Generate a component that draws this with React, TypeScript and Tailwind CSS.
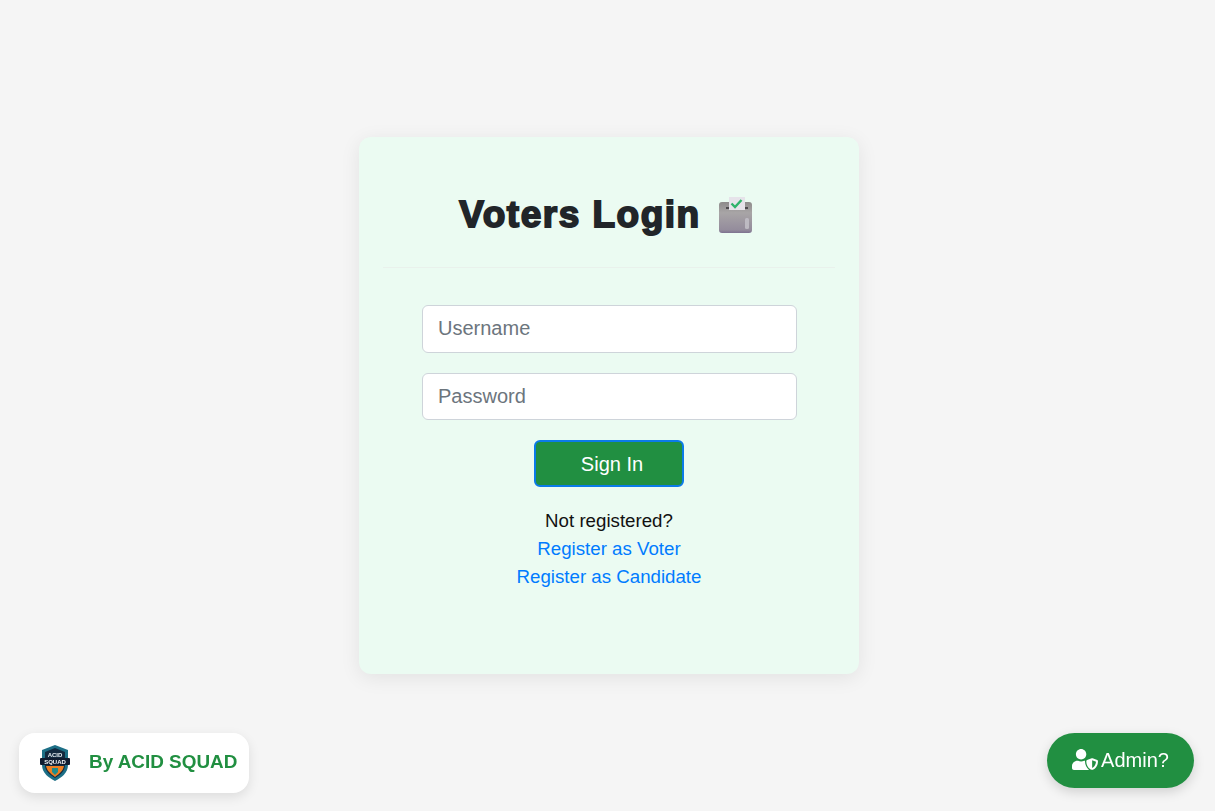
import { FaUserShield } from 'react-icons/fa';

function BallotBox() {
  return (
    <svg width="36" height="37" viewBox="0 0 36 37" className="shrink-0 mt-[3px]">
      <defs>
        <linearGradient id="boxBody" x1="0" y1="0" x2="0" y2="1">
          <stop offset="0" stopColor="#8e8b8b" />
          <stop offset="0.35" stopColor="#a8a5a6" />
          <stop offset="0.9" stopColor="#948c9c" />
          <stop offset="1" stopColor="#7d7190" />
        </linearGradient>
      </defs>
      <rect x="1" y="5" width="33" height="31" rx="3" fill="url(#boxBody)" />
      <rect x="8" y="10" width="22" height="2" fill="#4d4a4e" />
      <rect x="11" y="0" width="16" height="13" fill="#e6e3ea" />
      <path d="M13.5 6.5l3.5 3.5 6.5-7" fill="none" stroke="#2fb36b" strokeWidth="2.4" />
      <rect x="27" y="21" width="4" height="11" rx="1.5" fill="#bdbac2" />
    </svg>
  );
}

function AcidLogo() {
  return (
    <svg width="32" height="36" viewBox="0 0 32 36" className="shrink-0">
      <path d="M16 0l13 5v15c0 8-7 13-13 16C10 33 3 28 3 20V5z" fill="#1d6f86" />
      <path d="M16 3l10 4v13c0 6-5 10-10 13C11 30 6 26 6 20V7z" fill="#13293f" />
      <path d="M7 21h18c-1 5-5 8-9 11-4-3-8-6-9-11z" fill="#ee7f22" />
      <rect x="1" y="13" width="30" height="7" rx="1" fill="#101c30" />
      <text x="16" y="12" textAnchor="middle" fontSize="6" fontWeight="700" fill="#e6edf2" fontFamily="Liberation Sans">ACID</text>
      <text x="16" y="18.5" textAnchor="middle" fontSize="6" fontWeight="700" fill="#f1f5f8" fontFamily="Liberation Sans">SQUAD</text>
      <path d="M13 23h6v4l-3 3-3-3z" fill="#1f8d8d" />
    </svg>
  );
}

export default function App() {
  return (
    <div className="min-h-screen bg-[#f5f5f5] flex items-start justify-center pl-[3px] pt-[137px] font-['Liberation_Sans',Arial,sans-serif] text-[#212529]">
      {/* Login card */}
      <div className="w-[500px] h-[537px] bg-[#ebfbf2] rounded-xl shadow-[0_4px_20px_rgba(0,0,0,0.08)] px-6 pt-[52px]">
        <div className="flex items-center justify-center gap-[17px] h-[50px] pr-[5px]">
          <h1 className="mt-[2px] text-[37px] leading-[50px] font-bold tracking-[1.5px] [-webkit-text-stroke:1.8px_#212529]">
            Voters Login
          </h1>
          <BallotBox />
        </div>
        <hr className="mt-[28px] border-t border-[#e9f1ec]" />

        <form className="ml-[39px] mr-[38px] mt-[37px] flex flex-col">
          <input
            placeholder="Username"
            className="w-full h-[48px] px-[15px] pb-[2px] bg-white border border-[#ced4da] rounded-md text-[20px] outline-none placeholder:text-[#6c757d]"
          />
          <input
            placeholder="Password"
            className="w-full h-[47px] mt-[20px] px-[15px] bg-white border border-[#ced4da] rounded-md text-[20px] outline-none placeholder:text-[#6c757d]"
          />
          <button
            type="button"
            className="self-start ml-[112px] w-[150px] h-[47px] mt-[20px] pl-[6px] bg-[#218f41] border-2 border-[#0b7be8] rounded-md text-white text-[20px]"
          >
            Sign In
          </button>
        </form>

        <div className="mt-[20px] text-center text-[18.7px] leading-[28px]">
          <p className="text-[#111]">Not registered?</p>
          <a className="block text-[#007bff]">Register as Voter</a>
          <a className="block text-[#007bff]">Register as Candidate</a>
        </div>
      </div>

      {/* Credit badge */}
      <div className="fixed left-[19px] bottom-[18px] w-[230px] h-[60px] bg-white rounded-2xl shadow-[0_4px_12px_rgba(0,0,0,0.1)] flex items-center pl-5 gap-[18px]">
        <AcidLogo />
        <span className="text-[#218f41] text-[18.9px] font-bold whitespace-nowrap pb-[2px]">By ACID SQUAD</span>
      </div>

      {/* Admin button */}
      <button
        type="button"
        className="fixed right-[21px] bottom-[23px] w-[147px] h-[55px] pb-[2px] bg-[#218f41] rounded-full shadow-[0_4px_12px_rgba(0,0,0,0.15)] text-white text-[20px] flex items-center justify-center gap-[3px]"
      >
        <FaUserShield className="w-[26px] h-[21px]" />
        Admin?
      </button>
    </div>
  );
}
